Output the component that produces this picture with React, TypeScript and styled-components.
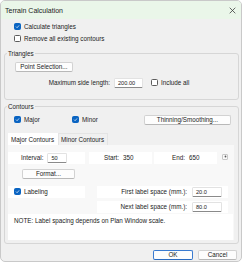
import styled, { createGlobalStyle } from "styled-components";

const GlobalStyle = createGlobalStyle`
  html, body {
    margin: 0;
    padding: 0;
    background: #ffffff;
  }
  body {
    font-family: "Liberation Sans", Arial, sans-serif;
  }
  * {
    box-sizing: border-box;
  }
`;

const Window = styled.div`
  width: 242px;
  height: 262px;
  border: 1px solid #c9c9c9;
  border-radius: 5px;
  overflow: hidden;
  background: #f0f0f0;
  display: flex;
  flex-direction: column;
  font-size: 6.3px;
  color: #1b1b1b;
`;

const TitleBar = styled.div`
  height: 18px;
  flex: none;
  background: #eaf6e9;
  display: flex;
  align-items: center;
  justify-content: space-between;
  padding: 0 5px 0 4px;
  font-size: 7px;
`;

const Body = styled.div`
  display: flex;
  flex-direction: column;
  padding: 1.5px 2px 0 3px;
`;

const CheckRow = styled.label<{ $indent?: number }>`
  display: flex;
  align-items: center;
  gap: 3px;
  height: 12px;
  padding-left: ${(p) => p.$indent ?? 10}px;
`;

const Box = styled.span<{ $checked?: boolean }>`
  width: 7px;
  height: 7px;
  flex: none;
  border-radius: 1.5px;
  display: inline-flex;
  align-items: center;
  justify-content: center;
  background: ${(p) => (p.$checked ? "#0a64c2" : "#ffffff")};
  border: 1px solid ${(p) => (p.$checked ? "#0a64c2" : "#5c5c5c")};
`;

const Group = styled.div<{ $top: number }>`
  margin-top: ${(p) => p.$top}px;
  border: 1px solid #d6d6d6;
  border-radius: 3px;
  display: flex;
  flex-direction: column;
`;

const Legend = styled.div`
  margin: -4px 0 0 2px;
  padding: 0 1px;
  height: 8px;
  line-height: 8px;
  width: max-content;
  background: #f0f0f0;
`;

const Button = styled.button<{ $w: number; $default?: boolean }>`
  width: ${(p) => p.$w}px;
  height: 10px;
  padding: 0;
  font: inherit;
  color: #1b1b1b;
  background: #fdfdfd;
  border: 1px solid ${(p) => (p.$default ? "#3a7bd0" : "#d2d2d2")};
  border-bottom-color: ${(p) => (p.$default ? "#2a6bc0" : "#b8b8b8")};
  border-radius: 2px;
  display: flex;
  align-items: center;
  justify-content: center;
`;

const Row = styled.div<{ $top?: number; $left?: number }>`
  display: flex;
  align-items: center;
  margin-top: ${(p) => p.$top ?? 0}px;
  padding-left: ${(p) => p.$left ?? 0}px;
`;

const RightLabel = styled.span<{ $w: number }>`
  width: ${(p) => p.$w}px;
  text-align: right;
  flex: none;
`;

const Field = styled.div<{ $w: number }>`
  width: ${(p) => p.$w}px;
  height: 10px;
  flex: none;
  background: #ffffff;
  border: 1px solid #e2e2e2;
  border-bottom-color: #8a8a8a;
  border-radius: 1.5px;
  display: flex;
  align-items: center;
  padding-left: 3px;
  font-size: 5.6px;
`;

const Tabs = styled.div`
  margin: 7px 4px 0 3px;
  display: flex;
  flex-direction: column;
`;

const TabStrip = styled.div`
  display: flex;
  height: 12px;
`;

const Tab = styled.div<{ $active?: boolean }>`
  padding: 0 3px 0 2px;
  display: flex;
  align-items: center;
  background: ${(p) => (p.$active ? "#ffffff" : "#f0f0f0")};
  border: 1px solid ${(p) => (p.$active ? "#ffffff" : "#e4e4e4")};
  border-bottom: none;
`;

const Panel = styled.div`
  height: 95px;
  background: #f8f8f8;
  display: flex;
  flex-direction: column;
  padding-top: 7px;
`;

const PanelRow = styled.div<{ $top?: number }>`
  display: flex;
  align-items: stretch;
  height: 12px;
  margin-top: ${(p) => p.$top ?? 0}px;
`;

const Cell = styled.div<{ $w: number; $ml?: number; $pl?: number }>`
  width: ${(p) => p.$w}px;
  margin-left: ${(p) => p.$ml ?? 0}px;
  padding-left: ${(p) => p.$pl ?? 0}px;
  background: #ffffff;
  display: flex;
  align-items: center;
  gap: 4px;
  flex: none;
`;

const Spin = styled.div`
  width: 6px;
  height: 6px;
  margin: 2px 0 0 5px;
  border: 1px solid #c8c8c8;
  border-radius: 1px;
  background: #fafafa;
  display: flex;
  align-items: center;
  justify-content: center;
`;

const Note = styled.div`
  margin-top: 1px;
  flex: 1;
  background: #ffffff;
  padding: 3px 0 0 6px;
  margin-right: 1px;
`;

const Footer = styled.div`
  display: flex;
  justify-content: flex-end;
  gap: 5px;
  margin-top: 6px;
  padding-right: 2px;
`;

const Check = ({ on }: { on?: boolean }) => (
  <Box $checked={on}>
    {on && (
      <svg width="5" height="5" viewBox="0 0 10 10">
        <path d="M2 5.2 L4.2 7.4 L8.2 2.8" fill="none" stroke="#ffffff" strokeWidth="1.4" />
      </svg>
    )}
  </Box>
);

export default function App() {
  return (
    <>
      <GlobalStyle />
      <Window>
        <TitleBar>
          <span>Terrain Calculation</span>
          <svg width="7" height="7" viewBox="0 0 10 10">
            <path d="M1 1 L9 9 M9 1 L1 9" stroke="#3a3a3a" strokeWidth="1.1" />
          </svg>
        </TitleBar>
        <Body>
          <CheckRow>
            <Check on />
            Calculate triangles
          </CheckRow>
          <CheckRow>
            <Check />
            Remove all existing contours
          </CheckRow>

          <Group $top={8}>
            <Legend>Triangles</Legend>
            <Row $top={4} $left={10}>
              <Button $w={58}>Point Selection...</Button>
            </Row>
            <Row $top={5}>
              <RightLabel $w={105}>Maximum side length:</RightLabel>
              <Field $w={29} style={{ marginLeft: 4 }}>200.00</Field>
              <CheckRow $indent={8}>
                <Check />
                Include all
              </CheckRow>
            </Row>
            <div style={{ height: 10 }} />
          </Group>

          <Group $top={6}>
            <Legend>Contours</Legend>
            <Row $top={3} $left={9}>
              <CheckRow $indent={0} style={{ width: 58 }}>
                <Check on />
                Major
              </CheckRow>
              <CheckRow $indent={0} style={{ width: 72 }}>
                <Check on />
                Minor
              </CheckRow>
              <Button $w={87}>Thinning/Smoothing...</Button>
            </Row>
            <Tabs>
              <TabStrip>
                <Tab $active>Major Contours</Tab>
                <Tab>Minor Contours</Tab>
              </TabStrip>
              <Panel>
                <PanelRow>
                  <Cell $w={77} $pl={13}>
                    Interval:
                    <Field $w={20} style={{ height: 10 }}>50</Field>
                  </Cell>
                  <Cell $w={63} $ml={4} $pl={15}>
                    Start: <span>350</span>
                  </Cell>
                  <Cell $w={63} $ml={2} $pl={18}>
                    End: <span>650</span>
                  </Cell>
                  <Spin>
                    <svg width="3" height="3" viewBox="0 0 4 4">
                      <circle cx="2" cy="2" r="1.2" fill="#555" />
                    </svg>
                  </Spin>
                </PanelRow>
                <Row $top={5} $left={14}>
                  <Button $w={53}>Format...</Button>
                </Row>
                <PanelRow $top={7}>
                  <Cell $w={77} $pl={6} style={{ gap: 3 }}>
                    <Check on />
                    Labeling
                  </Cell>
                  <Cell $w={131} $ml={12} style={{ gap: 5 }}>
                    <RightLabel $w={90}>First label space (mm.):</RightLabel>
                    <Field $w={30}>20.0</Field>
                  </Cell>
                </PanelRow>
                <PanelRow $top={3}>
                  <Cell $w={131} $ml={89} style={{ gap: 5 }}>
                    <RightLabel $w={90}>Next label space (mm.):</RightLabel>
                    <Field $w={30}>80.0</Field>
                  </Cell>
                </PanelRow>
                <Note>NOTE: Label spacing depends on Plan Window scale.</Note>
              </Panel>
            </Tabs>
            <div style={{ height: 3 }} />
          </Group>

          <Footer>
            <Button $w={40} $default>
              OK
            </Button>
            <Button $w={39}>Cancel</Button>
          </Footer>
        </Body>
      </Window>
    </>
  );
}
